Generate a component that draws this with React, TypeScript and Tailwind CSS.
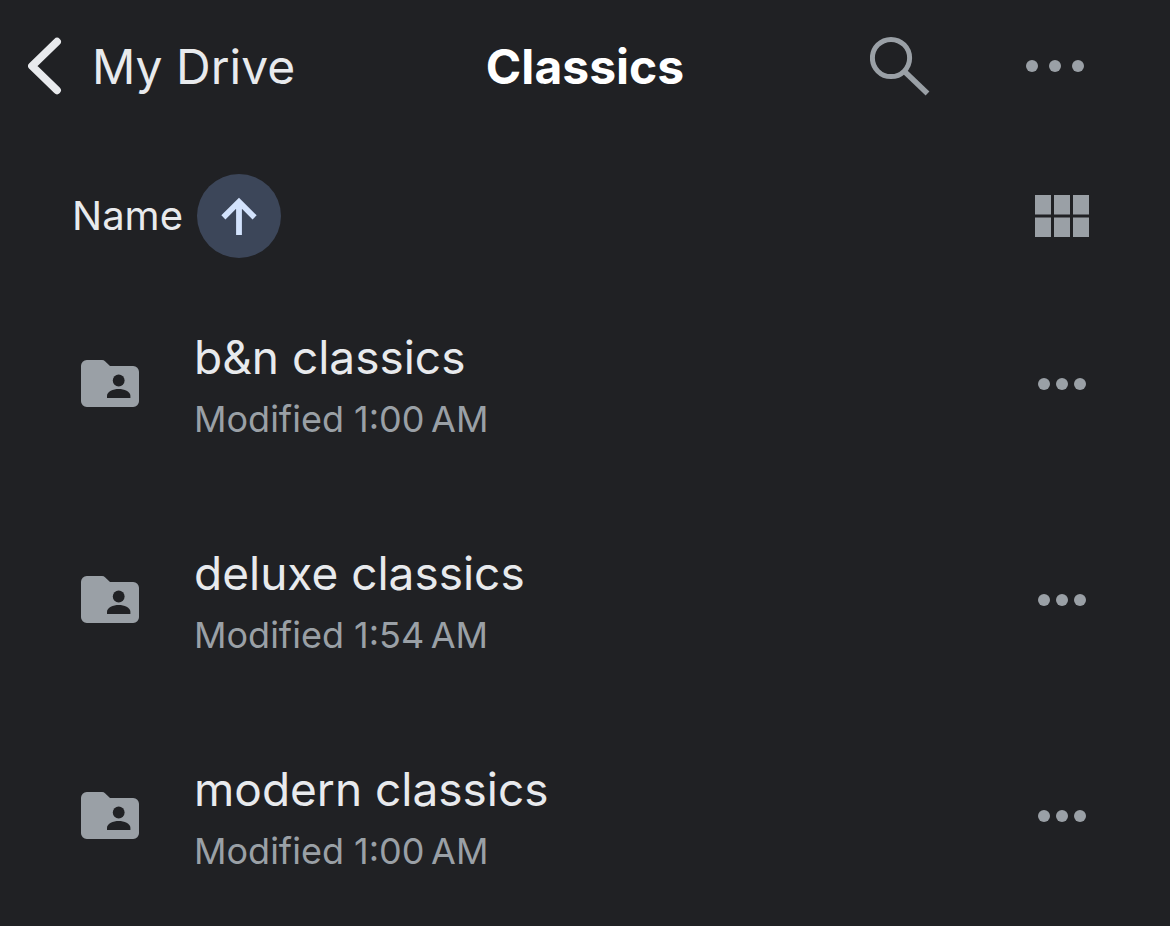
type DriveFolder = {
  name: string;
  modified: string;
};

// \u202f is the narrow no-break space iOS puts before AM/PM
const folders: DriveFolder[] = [
  { name: "b&n classics", modified: "1:00\u202fAM" },
  { name: "deluxe classics", modified: "1:54\u202fAM" },
  { name: "modern classics", modified: "1:00\u202fAM" },
];

function BackIcon() {
  return (
    <svg viewBox="0 0 34 58" className="h-[58px] w-[34px]" fill="none" aria-hidden="true">
      <path d="M29 4.7 4 29l25 24.3" stroke="currentColor" strokeWidth="7.8" strokeLinecap="round" strokeLinejoin="round" />
    </svg>
  );
}

function SearchIcon() {
  return (
    <svg viewBox="0 0 60 60" className="size-[60px]" fill="none" stroke="currentColor" strokeWidth="5" aria-hidden="true">
      <circle cx="21" cy="22" r="18.6" />
      <path d="m34 35 23.5 22.5" strokeWidth="5.4" />
    </svg>
  );
}

function ArrowUpIcon() {
  return (
    <svg viewBox="0 0 36 38" className="h-[38px] w-9" fill="none" stroke="currentColor" strokeWidth="5.8" aria-hidden="true">
      <path d="M18 38V5M2.4 20.4 18 4.8l15.6 15.6" />
    </svg>
  );
}

function GridIcon() {
  return (
    <svg viewBox="0 0 54 42" className="h-[42px] w-[54px]" fill="currentColor" aria-hidden="true">
      <path d="M0 0h16v19.5H0zM19 0h16v19.5H19zM38 0h16v19.5H38zM0 22.5h16V42H0zM19 22.5h16V42H19zM38 22.5h16V42H38z" />
    </svg>
  );
}

function SharedFolderIcon() {
  return (
    <svg viewBox="0 0 58 48" className="h-12 w-[58px] shrink-0" aria-hidden="true">
      <path
        d="M5.8 0H21a4 4 0 0 1 3 1.3L29 6h23.2A5.8 5.8 0 0 1 58 11.8v29.4a5.8 5.8 0 0 1-5.8 5.8H5.8A5.8 5.8 0 0 1 0 41.2V5.8A5.8 5.8 0 0 1 5.8 0Z"
        fill="#9aa0a6"
      />
      <circle cx="37.7" cy="20.5" r="5.9" fill="#202124" />
      <path d="M26 38v-2.2c0-4.4 6.2-6.8 11.7-6.8s11.7 2.4 11.7 6.8V38Z" fill="#202124" />
    </svg>
  );
}

function MoreIcon({ wide = false }: { wide?: boolean }) {
  return (
    <span className={`flex ${wide ? "gap-[11px]" : "gap-1.5"}`} aria-hidden="true">
      <span className="size-3 rounded-full bg-[#9aa0a6]" />
      <span className="size-3 rounded-full bg-[#9aa0a6]" />
      <span className="size-3 rounded-full bg-[#9aa0a6]" />
    </span>
  );
}

function Header() {
  return (
    <header className="grid h-[132px] grid-cols-[1fr_auto_1fr] items-center pr-[86px] pl-7">
      <button type="button" className="flex items-center gap-[30px] justify-self-start text-5xl">
        <BackIcon />
        <span className="pt-0.5">My Drive</span>
      </button>
      <h1 className="-mr-[58px] pt-0.5 text-5xl font-bold text-white">Classics</h1>
      <div className="flex items-center gap-24 justify-self-end text-[#9aa0a6]">
        <button type="button" aria-label="Search">
          <SearchIcon />
        </button>
        <button type="button" aria-label="More options">
          <MoreIcon wide />
        </button>
      </div>
    </header>
  );
}

function FolderRow({ folder }: { folder: DriveFolder }) {
  return (
    <li className="flex h-[216px] items-center pr-[84px] pl-[81px]">
      <SharedFolderIcon />
      <div className="ml-[55px] min-w-0 flex-1 pt-2">
        <h2 className="truncate text-[46px] leading-[62px]">{folder.name}</h2>
        <p className="truncate text-4xl leading-[62px] text-[#9aa0a6]">Modified {folder.modified}</p>
      </div>
      <button type="button" aria-label={`More actions for ${folder.name}`}>
        <MoreIcon />
      </button>
    </li>
  );
}

export default function App() {
  return (
    <div className="min-h-screen bg-[#202124] font-['Inter','Liberation_Sans',sans-serif] text-[#e8eaed]">
      <Header />
      <main>
        <div className="flex items-center justify-between pt-[42px] pr-[81px] pb-[18px] pl-[72px]">
          <button type="button" className="flex items-center gap-3.5 text-[40px]">
            <span>Name</span>
            <span className="flex size-[84px] items-center justify-center rounded-full bg-[#3c4659] text-[#d3e3fd]">
              <ArrowUpIcon />
            </span>
          </button>
          <button type="button" aria-label="Grid view" className="text-[#9aa0a6]">
            <GridIcon />
          </button>
        </div>
        <ul>
          {folders.map((folder) => (
            <FolderRow key={folder.name} folder={folder} />
          ))}
        </ul>
      </main>
    </div>
  );
}
